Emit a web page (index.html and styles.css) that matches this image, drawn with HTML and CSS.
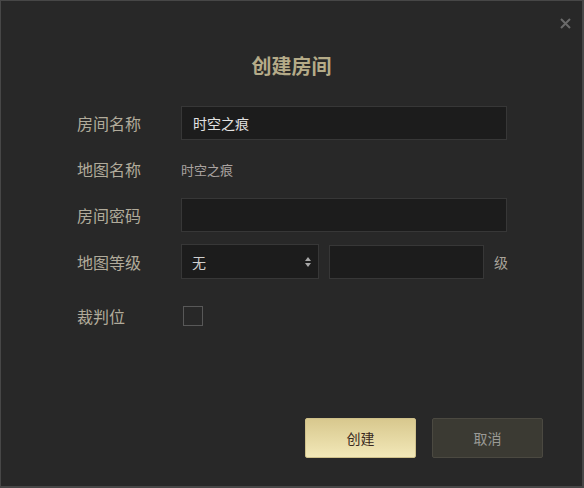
FILE: index.html
```html
<!DOCTYPE html>
<html lang="zh">
<head>
<meta charset="utf-8">
<link rel="stylesheet" href="styles.css">
</head>
<body>
<div class="dialog">
  <button class="close" aria-label="关闭">
    <svg width="11" height="11" viewBox="0 0 11 11"><path d="M1 1L10 10M10 1L1 10" stroke="#6a6a6a" stroke-width="2"/></svg>
  </button>
  <h1 class="title">创建房间</h1>
  <div class="form">
    <div class="row">
      <span class="label">房间名称</span>
      <div class="input wide"><span class="val">时空之痕</span></div>
    </div>
    <div class="row">
      <span class="label">地图名称</span>
      <span class="static">时空之痕</span>
    </div>
    <div class="row">
      <span class="label">房间密码</span>
      <div class="input wide"></div>
    </div>
    <div class="row">
      <span class="label">地图等级</span>
      <div class="select"><span class="val">无</span>
        <svg class="arrows" width="8" height="12" viewBox="0 0 8 12"><path d="M4 1L7 5H1Z M4 11L7 7H1Z" fill="#a8a8a8"/></svg>
      </div>
      <div class="input level"></div>
      <span class="unit">级</span>
    </div>
    <div class="row judge">
      <span class="label">裁判位</span>
      <span class="check"></span>
    </div>
  </div>
  <div class="actions">
    <button class="btn primary">创建</button>
    <button class="btn secondary">取消</button>
  </div>
</div>
</body>
</html>
```
FILE: styles.css
```css
* { box-sizing: border-box; }
html, body { margin: 0; padding: 0; background: #282828; }
body { font-family: "Noto Sans CJK SC", "Noto Sans", sans-serif; }
.dialog {
  position: relative;
  width: 584px;
  height: 488px;
  background: #282828;
  border: 1px solid #474747;
  border-bottom-width: 2px;
  border-right-width: 2px;
}
.close {
  position: absolute;
  top: 16px;
  right: 10px;
  width: 13px;
  height: 13px;
  padding: 1px;
  border: 0;
  background: none;
  display: flex;
}
.title {
  margin: 0;
  padding-top: 50px;
  text-align: center;
  font-size: 20px;
  line-height: 30px;
  font-weight: 700;
  color: #b5ab88;
}
.form {
  margin-top: 25px;
  padding-left: 76px;
  display: flex;
  flex-direction: column;
}
.row {
  display: flex;
  align-items: center;
  height: 34px;
  margin-bottom: 12px;
}
.row:nth-child(4) { height: 35px; }
.row.judge { margin-top: 8px; height: 34px; }
.label {
  width: 104px;
  font-size: 16px;
  color: #b1ab9b;
  line-height: 20px;
}
.input, .select {
  height: 34px;
  background: #1c1c1c;
  border: 1px solid #373737;
  display: flex;
  align-items: center;
}
.input.wide { width: 326px; padding-left: 11px; }
.val { font-size: 14px; color: #e2e2e2; }
.static { font-size: 13px; color: #aaa3a0; }
.select {
  width: 138px;
  height: 35px;
  padding: 0 6px 0 10px;
  justify-content: space-between;
}
.select .val { color: #d0d0d0; }
.input.level { width: 155px; height: 34px; margin-left: 10px; }
.unit { margin-left: 10px; font-size: 14px; color: #a9a49a; }
.check {
  width: 20px;
  height: 20px;
  margin-left: 2px;
  border: 1px solid #585858;
  background: #282828;
}
.actions {
  position: absolute;
  left: 304px;
  top: 417px;
  display: flex;
  gap: 16px;
}
.btn {
  width: 111px;
  height: 40px;
  border-radius: 2px;
  font-family: "Noto Sans CJK SC", sans-serif;
  font-size: 14px;
  cursor: pointer;
}
.primary {
  border: 1px solid #cfc08a;
  background: linear-gradient(#d8c88e, #f2e8b8);
  color: #3a2a1e;
}
.secondary {
  border: 1px solid #4b4941;
  background: #3b3a33;
  color: #9a9a96;
}
```
